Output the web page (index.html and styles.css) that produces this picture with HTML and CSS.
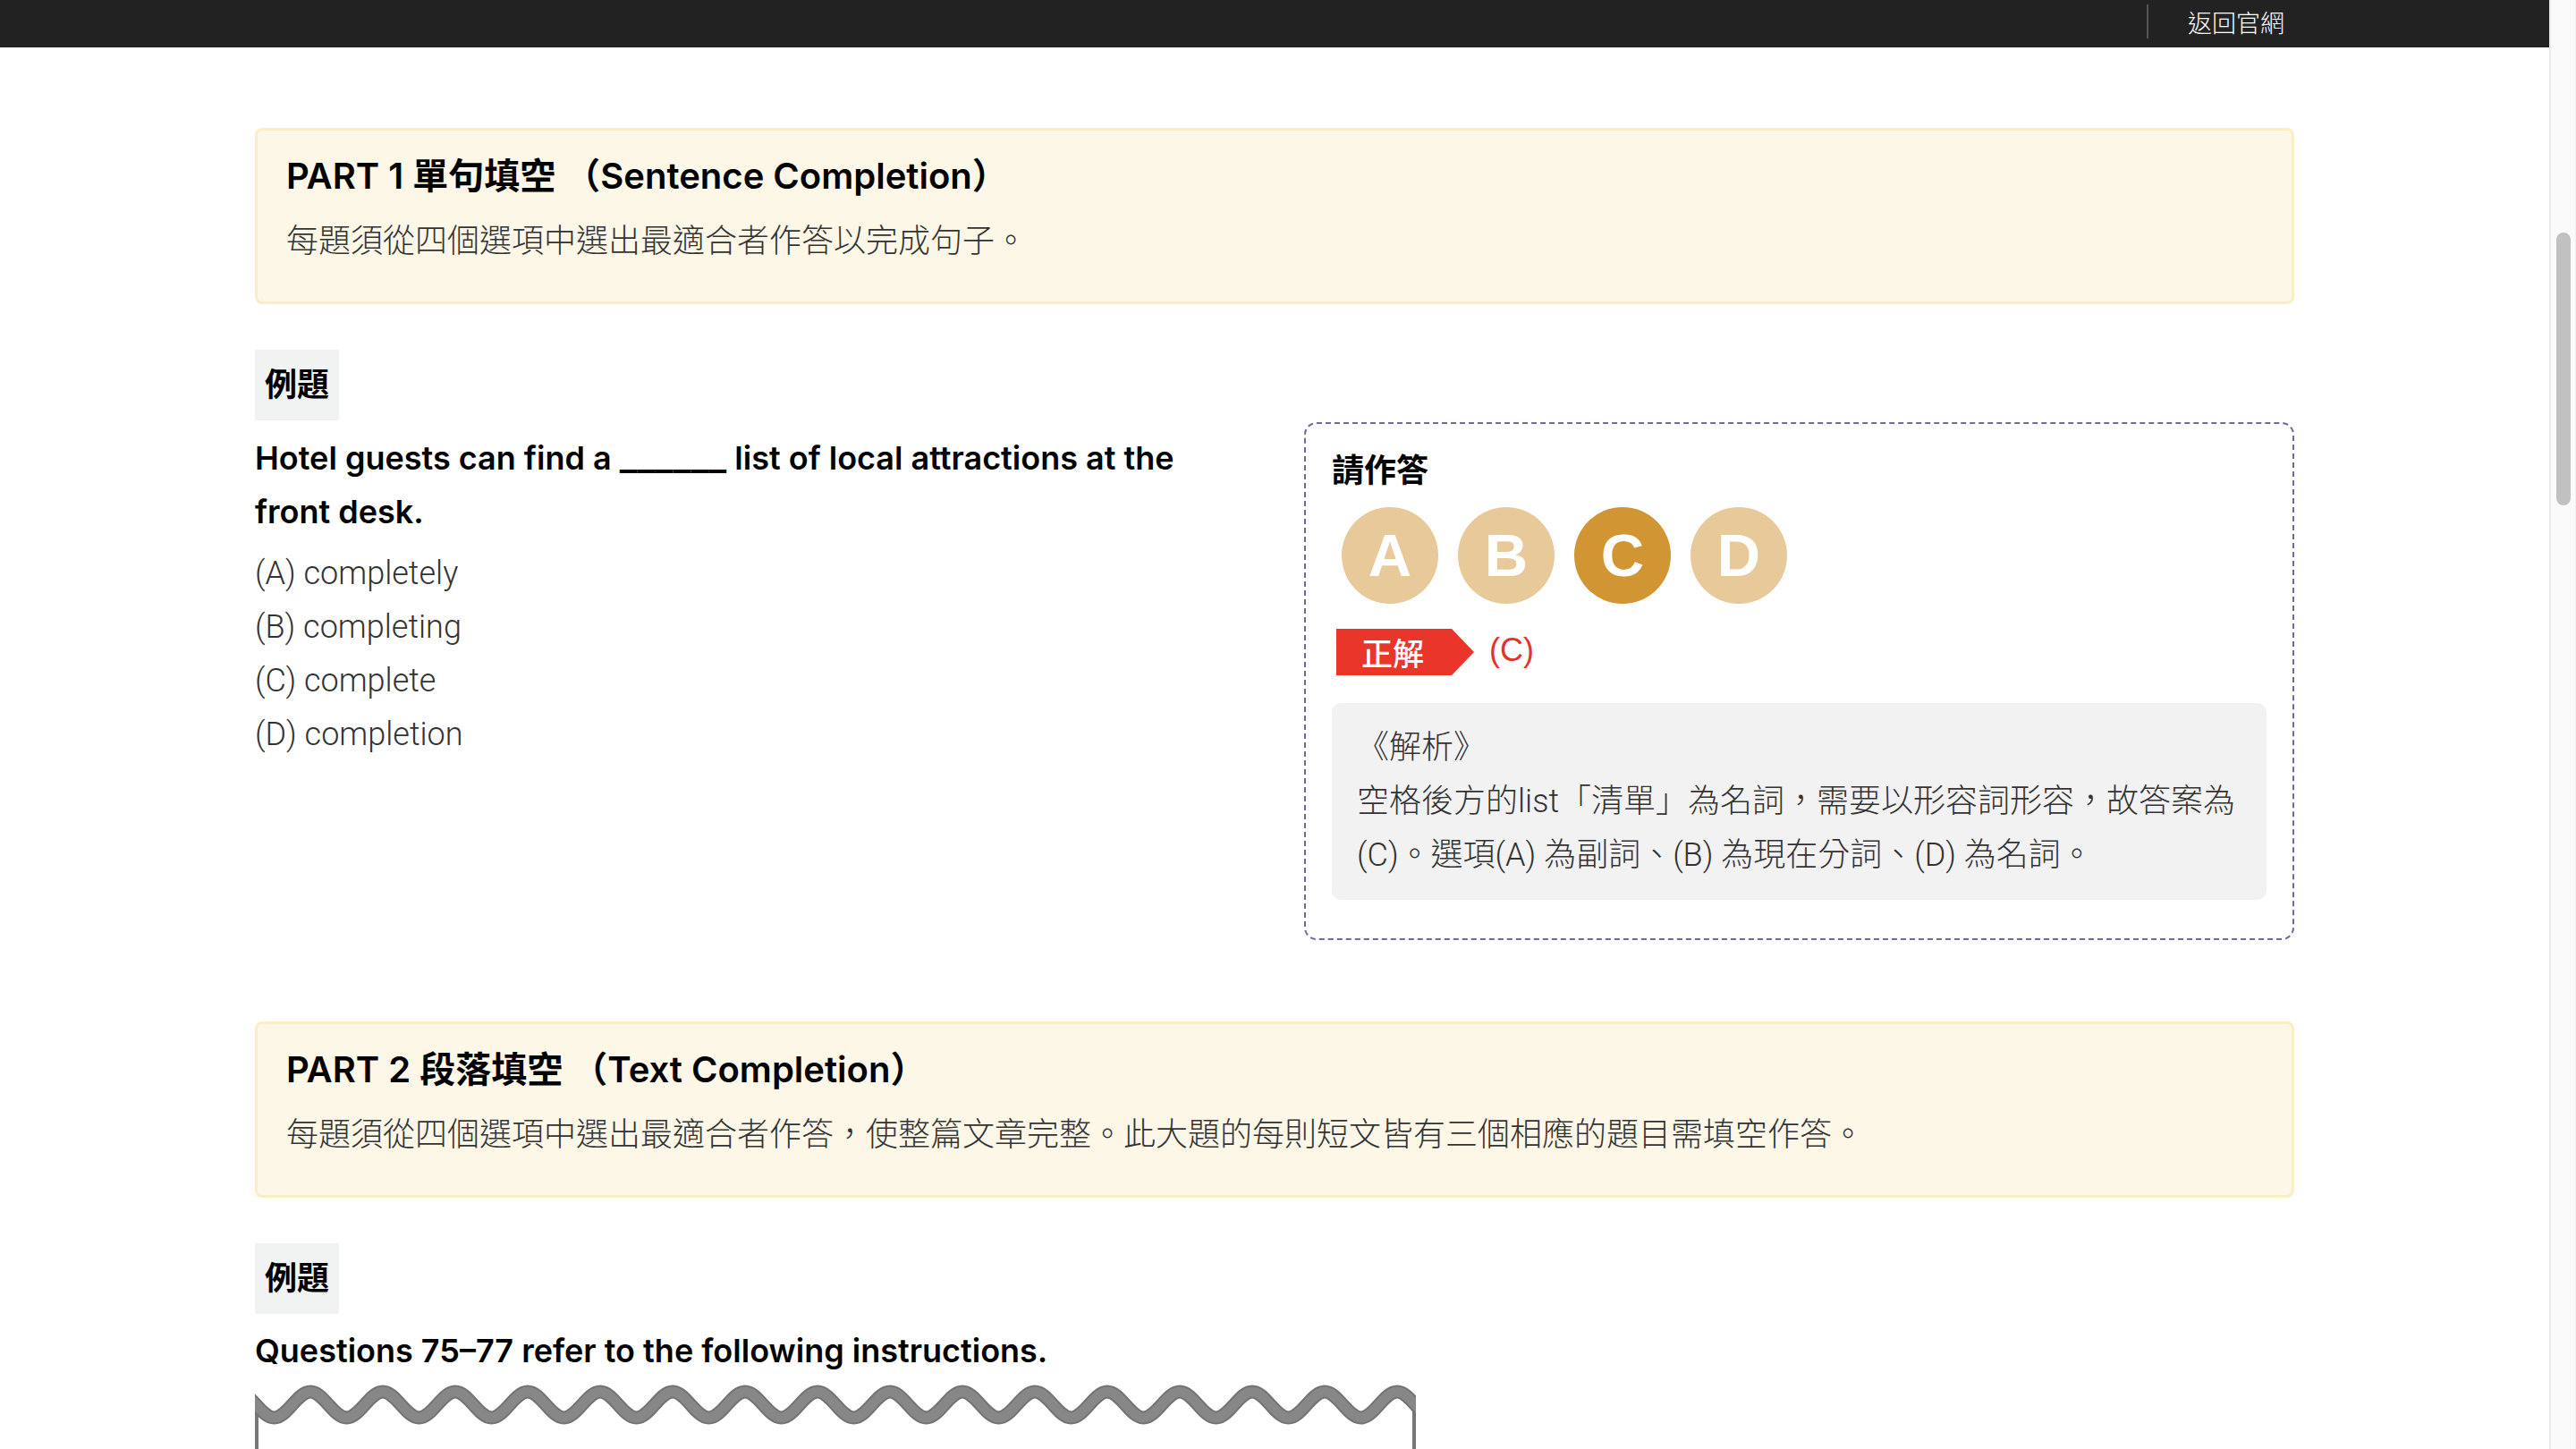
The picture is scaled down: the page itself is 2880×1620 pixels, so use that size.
FILE: index.html
```html
<!DOCTYPE html>
<html lang="zh-Hant">
<head>
<meta charset="utf-8">
<title>多益例題</title>
<link rel="stylesheet" href="styles.css">
</head>
<body>
<div class="window">
  <div class="main">
    <header class="topbar">
      <div class="topbar-inner">
        <span class="topbar-divider"></span>
        <a class="topbar-link" href="#">返回官網</a>
      </div>
    </header>
    <main class="content">
      <section class="part">
        <div class="part-head">
          <h2 class="part-title">PART 1 單句填空 （Sentence Completion）</h2>
          <p class="part-desc">每題須從四個選項中選出最適合者作答以完成句子。</p>
        </div>
        <div class="example-label">例題</div>
        <div class="example-grid">
          <div class="question">
            <p class="q-text"><span>Hotel guests can find a</span> <span class="blank">______</span> <span>list of local attractions at the</span> <span>front desk.</span></p>
            <ul class="options">
              <li>(A) completely</li>
              <li>(B) completing</li>
              <li>(C) complete</li>
              <li>(D) completion</li>
            </ul>
          </div>
          <div class="answer-panel">
            <div class="answer-title">請作答</div>
            <div class="choices">
              <span class="choice">A</span>
              <span class="choice">B</span>
              <span class="choice selected">C</span>
              <span class="choice">D</span>
            </div>
            <div class="correct">
              <span class="correct-tag">正解</span>
              <span class="correct-value">(C)</span>
            </div>
            <div class="analysis">
              <p>《解析》</p>
              <p>空格後方的list「清單」為名詞，需要以形容詞形容，故答案為(C)。選項(A) 為副詞、(B) 為現在分詞、(D) 為名詞。</p>
            </div>
          </div>
        </div>
      </section>

      <section class="part part-2">
        <div class="part-head">
          <h2 class="part-title">PART 2 段落填空 （Text Completion）</h2>
          <p class="part-desc">每題須從四個選項中選出最適合者作答，使整篇文章完整。此大題的每則短文皆有三個相應的題目需填空作答。</p>
        </div>
        <div class="example-label">例題</div>
        <p class="q-text q-intro">Questions 75–77 refer to the following instructions.</p>
        <svg class="paper" width="1298" height="120" viewBox="0 0 1298 120" aria-hidden="true">
          <path d="M 2 30 V 120 M 1296 30 V 120" stroke="#777" stroke-width="4" fill="none"/>
          <path d="M -19 16 c 14.75 0 25.75 29 40.5 29 s 25.75 -29 40.5 -29 s 25.75 29 40.5 29 s 25.75 -29 40.5 -29 s 25.75 29 40.5 29 s 25.75 -29 40.5 -29 s 25.75 29 40.5 29 s 25.75 -29 40.5 -29 s 25.75 29 40.5 29 s 25.75 -29 40.5 -29 s 25.75 29 40.5 29 s 25.75 -29 40.5 -29 s 25.75 29 40.5 29 s 25.75 -29 40.5 -29 s 25.75 29 40.5 29 s 25.75 -29 40.5 -29 s 25.75 29 40.5 29 s 25.75 -29 40.5 -29 s 25.75 29 40.5 29 s 25.75 -29 40.5 -29 s 25.75 29 40.5 29 s 25.75 -29 40.5 -29 s 25.75 29 40.5 29 s 25.75 -29 40.5 -29 s 25.75 29 40.5 29 s 25.75 -29 40.5 -29 s 25.75 29 40.5 29 s 25.75 -29 40.5 -29 s 25.75 29 40.5 29 s 25.75 -29 40.5 -29 s 25.75 29 40.5 29 s 25.75 -29 40.5 -29 s 25.75 29 40.5 29" fill="none" stroke="#737373" stroke-width="15"/>
          <path d="M -19 16 c 14.75 0 25.75 29 40.5 29 s 25.75 -29 40.5 -29 s 25.75 29 40.5 29 s 25.75 -29 40.5 -29 s 25.75 29 40.5 29 s 25.75 -29 40.5 -29 s 25.75 29 40.5 29 s 25.75 -29 40.5 -29 s 25.75 29 40.5 29 s 25.75 -29 40.5 -29 s 25.75 29 40.5 29 s 25.75 -29 40.5 -29 s 25.75 29 40.5 29 s 25.75 -29 40.5 -29 s 25.75 29 40.5 29 s 25.75 -29 40.5 -29 s 25.75 29 40.5 29 s 25.75 -29 40.5 -29 s 25.75 29 40.5 29 s 25.75 -29 40.5 -29 s 25.75 29 40.5 29 s 25.75 -29 40.5 -29 s 25.75 29 40.5 29 s 25.75 -29 40.5 -29 s 25.75 29 40.5 29 s 25.75 -29 40.5 -29 s 25.75 29 40.5 29 s 25.75 -29 40.5 -29 s 25.75 29 40.5 29 s 25.75 -29 40.5 -29 s 25.75 29 40.5 29 s 25.75 -29 40.5 -29 s 25.75 29 40.5 29" fill="none" stroke="#878787" stroke-width="11"/>
        </svg>
      </section>
    </main>
  </div>
  <div class="scrollbar"><div class="scroll-thumb"></div></div>
</div>
</body>
</html>
```

FILE: styles.css
```css
* { box-sizing: border-box; }
html, body { margin: 0; padding: 0; }
body {
  background: #fff;
  color: #000;
  font-family: "Liberation Sans", "Noto Sans CJK TC", sans-serif;
}

.window { display: flex; height: 1620px; overflow: hidden; }
.main { flex: 1; min-width: 0; overflow: hidden; }

.scrollbar {
  flex: none;
  width: 30px;
  background: #fafafa;
  border-left: 2px solid #ebebeb;
  border-right: 1px solid #f0f0f0;
  padding: 260px 0 0 6px;
}
.scroll-thumb { width: 16px; height: 305px; border-radius: 8px; background: #c1c1c1; }

/* top bar */
.topbar { background: #222; height: 53px; }
.topbar-inner {
  width: 2280px; margin: 0 auto; height: 100%;
  display: flex; justify-content: flex-end; align-items: center;
  padding: 0 11px 5px 0;
}
.topbar-divider { width: 2px; height: 38px; background: #555; margin-right: 44px; }
.topbar-link {
  color: #fff; text-decoration: none;
  font-family: "Noto Sans CJK TC", sans-serif; font-weight: 300;
  font-size: 27px; line-height: 1;
}

/* content */
.content { width: 2280px; margin: 0 auto; padding-top: 90px; }
.part-2 { margin-top: 91px; }

.part-head {
  background: #fdf7e7;
  border: 3px solid #fbeec4;
  border-radius: 8px;
  padding: 23px 32px 43px;
}
.part-title {
  margin: 0; font-size: 40px; line-height: 56px; font-weight: 600;
  font-family: "Inter", "Noto Sans CJK TC", sans-serif;
}
.part-desc {
  margin: 13px 0 0; font-size: 36px; line-height: 56px; color: #333;
  font-family: "Noto Sans CJK TC", sans-serif; font-weight: 300;
}

.example-label {
  width: fit-content;
  margin-top: 51px;
  padding: 0 11px;
  background: #f1f2f2;
  font-size: 36px; line-height: 79px; font-weight: 700;
}

.example-grid {
  display: grid;
  grid-template-columns: 1fr 1107px;
  column-gap: 65px;
  align-items: start;
  margin-top: 2px;
}
.question { padding-top: 10px; }
.q-text {
  margin: 0; font-size: 36px; line-height: 60px; font-weight: 600; color: #000;
  font-family: "Inter", "Noto Sans CJK TC", sans-serif;
}
.blank { font-size: 43px; line-height: 1; font-weight: 500; }
.q-intro { margin-top: 11px; }
.options {
  list-style: none; margin: 9px 0 0; padding: 0;
  font-family: "Roboto", "Noto Sans CJK TC", sans-serif; font-weight: 300;
  font-size: 36px; line-height: 60px; color: #333;
}

.answer-panel {
  border: 2px dashed #6b6b9d;
  border-radius: 14px;
  padding: 28px 29px 43px 29px;
}
.answer-title { font-size: 36px; line-height: 50px; font-weight: 700; }
.choices { display: flex; gap: 22px; margin-top: 15px; padding-left: 11px; }
.choice {
  width: 108px; height: 108px; border-radius: 50%;
  background: #e8c99a; color: #fff;
  font-size: 67px; line-height: 108px; font-weight: 700; text-align: center;
}
.choice.selected { background: #d29534; }

.correct { display: flex; align-items: center; margin-top: 28px; margin-left: 5px; }
.correct-tag {
  width: 154px; height: 52px; padding-left: 28px;
  background: #e9352a; color: #fff;
  font-family: "Noto Sans CJK TC", sans-serif; font-weight: 500;
  font-size: 35px; line-height: 52px;
  clip-path: polygon(0 0, calc(100% - 25px) 0, 100% 50%, calc(100% - 25px) 100%, 0 100%);
}
.correct-value { margin-left: 17px; margin-bottom: 4px; color: #e3342a; font-size: 36px; line-height: 48px; }

.analysis {
  margin-top: 31px;
  background: #f2f2f2;
  border-radius: 10px;
  padding: 20px 20px 20px 28px;
  font-family: "Roboto", "Noto Sans CJK TC", sans-serif; font-weight: 300;
  font-size: 36px; line-height: 60px; color: #333;
}
.analysis p { margin: 0; }

.paper { display: block; }
```
